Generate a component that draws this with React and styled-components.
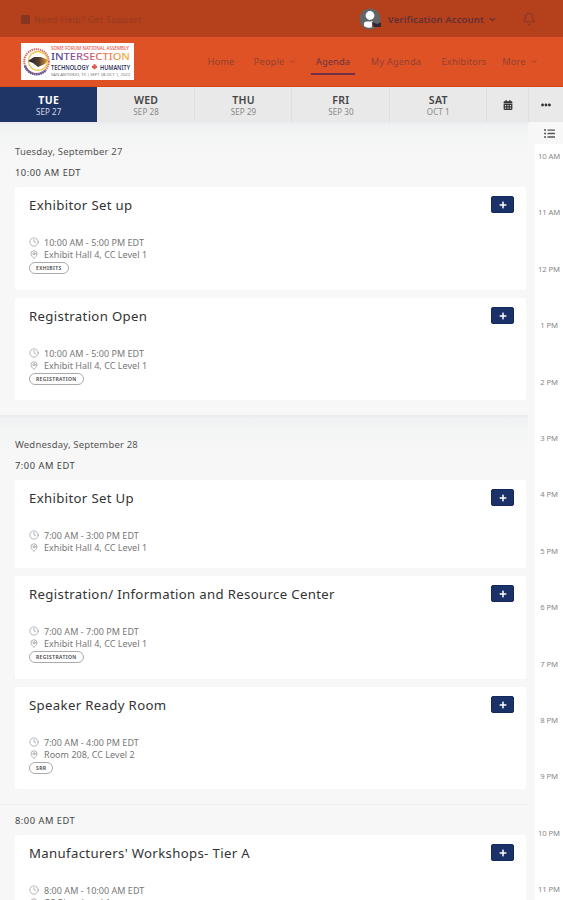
import React from 'react'
import styled, { createGlobalStyle } from 'styled-components'
import { FaPlus, FaCalendarAlt, FaEllipsisH, FaListUl } from 'react-icons/fa'
import { Bell, ChevronDown, Clock4, MapPin } from 'lucide-react'

const GlobalStyle = createGlobalStyle`
  * {
    box-sizing: border-box;
  }
  body {
    margin: 0;
    background: #f7f7f7;
    font-family: "Noto Sans", "Open Sans", sans-serif;
    color: #333;
  }
`
const Page = styled.div`
  width: 563px;
  height: 900px;
  overflow: hidden;
  display: flex;
  flex-direction: column;
`
const TopBar = styled.div`
  height: 37px;
  flex: none;
  background: #b5401c;
  display: flex;
  align-items: center;
  padding: 1px 27px 0 21px;
`
const Support = styled.div`
  display: flex;
  align-items: center;
  gap: 4px;
  font-size: 9px;
  letter-spacing: 0.27px;
  color: #963b20;
`
const SupportIcon = styled.span`
  width: 9px;
  height: 9px;
  border-radius: 1px;
  background: #86361f;
`
const Account = styled.div`
  margin-left: auto;
  display: flex;
  align-items: center;
  font-size: 9.5px;
  font-weight: 600;
  letter-spacing: 0.14px;
  color: #5f3035;

  span {
    margin: 0 4px 0 6px;
  }
`
const BellSlot = styled.div`
  margin-left: 25px;
  display: flex;
  color: #87362a;
`
const Nav = styled.div`
  height: 50px;
  flex: none;
  background: #df5226;
  border-bottom: 1px solid #d9461a;
  display: flex;
  align-items: center;
  padding: 0 24px 0 21px;
`
const LogoBox = styled.div`
  width: 113px;
  height: 37px;
  background: #fff;
  margin-bottom: 1px;

  svg {
    display: block;
  }
`
const Links = styled.div`
  margin-left: auto;
  display: flex;
  height: 25px;
  margin-bottom: -1px;
  gap: 10px;
`
const NavLink = styled.div`
  display: flex;
  justify-content: center;
  align-items: center;
  flex: none;
  width: ${(p) => p.$width}px;
  gap: 5px;
  padding-top: 1px;
  font-size: 9.3px;
  letter-spacing: 0.12px;
  white-space: nowrap;
  color: ${(p) => (p.$active ? '#6b3442' : '#94412f')};
  border-bottom: 2px solid ${(p) => (p.$active ? '#70304a' : 'transparent')};
`
const Days = styled.div`
  height: 35px;
  flex: none;
  display: flex;
  background: #e9e9e9;
`
const Day = styled.div`
  flex: 1;
  border-right: 1px solid ${(p) => (p.$active ? '#1e3566' : '#dedfe0')};
  text-align: center;
  padding: 6px 0 0 1px;
  background: ${(p) => (p.$active ? '#1e3566' : 'transparent')};
  color: ${(p) => (p.$active ? '#fff' : '#444')};
`
const DayName = styled.div`
  font-size: 10.5px;
  line-height: 14px;
  letter-spacing: 0.3px;
  font-weight: ${(p) => (p.$active ? 700 : 600)};
`
const DayDate = styled.div`
  font-size: 8px;
  line-height: 9px;
  letter-spacing: 0.1px;
  color: ${(p) => (p.$active ? '#d5dae5' : '#888')};
`
const DayTool = styled.div`
  width: ${(p) => p.$width}px;
  flex: none;
  display: flex;
  align-items: center;
  justify-content: center;
  color: #333;
  border-right: 1px solid #dedfe0;

  &:last-child {
    border-right: none;
  }
`
const Body = styled.div`
  flex: 1;
  min-height: 0;
  display: flex;
`
const List = styled.div`
  width: 535px;
`
const Section = styled.div`
  width: 528px;
  height: ${(p) => p.$height}px;
  padding: ${(p) => p.$top}px 2px 0 15px;
  border-top: ${(p) => (p.$line ? '1px solid #eee' : 'none')};
  background: ${(p) =>
    p.$shade ? 'linear-gradient(#eaebed 0, #f1f2f3 4px, #f3f4f4 14px, #f7f7f7 36px)' : 'none'};
`
const DateLabel = styled.div`
  font-size: 9.5px;
  line-height: 12px;
  letter-spacing: 0.18px;
  color: #555;
  margin-bottom: 9px;
`
const TimeLabel = styled.div`
  font-size: 9.3px;
  line-height: 12px;
  letter-spacing: 0.52px;
  color: #444;
  margin-bottom: 8px;
`
const Card = styled.div`
  height: ${(p) => p.$height}px;
  margin-bottom: 8px;
  background: #fff;
  border-radius: 2px;
  padding: 9px 12px 0 14px;
`
const CardTop = styled.div`
  display: flex;
  justify-content: space-between;
  align-items: flex-start;
  height: 40px;
`
const Title = styled.div`
  font-size: 13.2px;
  line-height: 18px;
  letter-spacing: 0.34px;
  color: #333;
`
const AddButton = styled.button`
  width: 23px;
  height: 17px;
  padding: 0;
  border: 1px solid #13285c;
  border-radius: 2px;
  background: #1a3267;
  color: #fff;
  display: flex;
  align-items: center;
  justify-content: center;
`
const Meta = styled.div`
  display: flex;
  align-items: center;
  gap: 5px;
  height: 12.6px;
  font-size: 9px;
  letter-spacing: 0.03px;
  color: #777;

  svg {
    color: #999;
    width: 10px;
  }
`
const Tag = styled.div`
  display: inline-flex;
  align-items: center;
  height: 12px;
  margin-top: 1px;
  padding: 0 6px;
  border: 1px solid #aaa;
  border-radius: 6px;
  font-size: 5px;
  font-weight: 600;
  letter-spacing: 0.4px;
  color: #444;
  vertical-align: top;
`
const Timeline = styled.div`
  width: 28px;
  background: #fff;
  overflow: hidden;
`
const ListIcon = styled.div`
  height: 22px;
  display: flex;
  align-items: center;
  justify-content: center;
  color: #555;
  background: #f7f7f7;
`
const Hour = styled.div`
  height: 56.4px;
  line-height: 25px;
  font-size: 7.7px;
  letter-spacing: -0.1px;
  text-align: center;
  color: #888;
  white-space: nowrap;
`

const days = [
  ['TUE', 'SEP 27'],
  ['WED', 'SEP 28'],
  ['THU', 'SEP 29'],
  ['FRI', 'SEP 30'],
  ['SAT', 'OCT 1'],
]

const hours = ['10 AM', '11 AM', '12 PM', '1 PM', '2 PM', '3 PM', '4 PM', '5 PM', '6 PM', '7 PM', '8 PM', '9 PM', '10 PM', '11 PM']

const links = [
  { label: 'Home', width: 36 },
  { label: 'People', width: 52, arrow: true },
  { label: 'Agenda', width: 44, active: true },
  { label: 'My Agenda', width: 62 },
  { label: 'Exhibitors', width: 54 },
  { label: 'More', width: 38, arrow: true },
]

const sections = [
  {
    date: 'Tuesday, September 27',
    time: '10:00 AM EDT',
    height: 293,
    top: 24,
    shade: true,
    sessions: [
      { title: 'Exhibitor Set up', time: '10:00 AM - 5:00 PM EDT', place: 'Exhibit Hall 4, CC Level 1', tag: 'EXHIBITS', height: 103 },
      { title: 'Registration Open', time: '10:00 AM - 5:00 PM EDT', place: 'Exhibit Hall 4, CC Level 1', tag: 'REGISTRATION', height: 102 },
    ],
  },
  {
    date: 'Wednesday, September 28',
    time: '7:00 AM EDT',
    height: 389,
    top: 24,
    shade: true,
    sessions: [
      { title: 'Exhibitor Set Up', time: '7:00 AM - 3:00 PM EDT', place: 'Exhibit Hall 4, CC Level 1', height: 88 },
      { title: 'Registration/ Information and Resource Center', time: '7:00 AM - 7:00 PM EDT', place: 'Exhibit Hall 4, CC Level 1', tag: 'REGISTRATION', height: 103 },
      { title: 'Speaker Ready Room', time: '7:00 AM - 4:00 PM EDT', place: 'Room 208, CC Level 2', tag: 'SRR', height: 102 },
    ],
  },
  {
    time: '8:00 AM EDT',
    height: 200,
    top: 10,
    line: true,
    sessions: [
      { title: "Manufacturers' Workshops- Tier A", time: '8:00 AM - 10:00 AM EDT', place: 'CC River Level 1', height: 103 },
    ],
  },
]

const Logo = () => (
  <svg width="113" height="37" viewBox="0 0 113 37" fontFamily="Noto Sans, sans-serif">
    <defs>
      <linearGradient id="rainbow">
        <stop offset="0" stopColor="#3c3f8f" />
        <stop offset="0.35" stopColor="#9a58a0" />
        <stop offset="0.6" stopColor="#e5645a" />
        <stop offset="1" stopColor="#f2b441" />
      </linearGradient>
      <linearGradient id="palm">
        <stop offset="0" stopColor="#20242e" />
        <stop offset="0.55" stopColor="#55402f" />
        <stop offset="1" stopColor="#f0a03c" />
      </linearGradient>
    </defs>
    <circle cx="15.5" cy="18.5" r="12.3" fill="none" stroke="#d96a67" strokeWidth="2" strokeDasharray="1.4 0.7" />
    <path d="M4 23 A12.3 12.3 0 0 0 25 27" fill="none" stroke="#454d99" strokeWidth="2.4" strokeDasharray="1.4 0.7" />
    <circle cx="17" cy="18" r="9.5" fill="#fff" stroke="#e9c84b" strokeWidth="1.3" />
    <path d="M7 18 L13 14 L20 14 L27 17 L24 21 L17 24 L12 20 Z" fill="url(#palm)" />
    <text x="30" y="7.3" fontSize="4.5" fontWeight="500" fill="#e2574e" textLength="78" lengthAdjust="spacingAndGlyphs">SOME FORUM NATIONAL ASSEMBLY</text>
    <text x="30" y="17" fontSize="9.4" fontWeight="500" fill="url(#rainbow)" textLength="79" lengthAdjust="spacingAndGlyphs">INTERSECTION</text>
    <text x="30" y="26.6" fontSize="7.4" fontWeight="600" fill="#34375f" textLength="38" lengthAdjust="spacingAndGlyphs">TECHNOLOGY</text>
    <path d="M73.5 21.3 V26.3 M71 23.8 H76" stroke="#e2574e" strokeWidth="2.3" />
    <text x="79" y="26.6" fontSize="7.4" fontWeight="600" fill="#34375f" textLength="30" lengthAdjust="spacingAndGlyphs">HUMANITY</text>
    <text x="30" y="33" fontSize="3.8" fill="#777" textLength="79" lengthAdjust="spacingAndGlyphs">SAN ANTONIO, TX | SEPT 28-OCT 1, 2022</text>
  </svg>
)

const Avatar = () => (
  <svg width="23" height="22" viewBox="0 0 23 22">
    <circle cx="11" cy="11" r="10.5" fill="#626669" />
    <circle cx="11" cy="7.5" r="4.4" fill="#fff" />
    <path d="M5 18 V15.5 Q5 13.5 8 13.5 H14 V19 Q8 21 5 18Z" fill="#fff" />
    <path d="M13 14 L18 16 L22 14.5 V19 H13Z" fill="#2b2736" />
    <path d="M13 14 V19 H15Z" fill="#b33b36" />
  </svg>
)

const Session = ({ item }) => (
  <Card $height={item.height}>
    <CardTop>
      <Title>{item.title}</Title>
      <AddButton aria-label="Add"><FaPlus size={8} /></AddButton>
    </CardTop>
    <Meta><Clock4 size={10} strokeWidth={1.7} />{item.time}</Meta>
    <Meta><MapPin size={9} strokeWidth={2} />{item.place}</Meta>
    {item.tag && <Tag>{item.tag}</Tag>}
  </Card>
)

const App = () => {
  return (
    <Page>
      <GlobalStyle />
      <TopBar>
        <Support><SupportIcon />Need Help? Get Support</Support>
        <Account>
          <Avatar />
          <span>Verification Account</span>
          <ChevronDown size={9} strokeWidth={3} />
        </Account>
        <BellSlot><Bell size={14} strokeWidth={1.8} /></BellSlot>
      </TopBar>
      <Nav>
        <LogoBox><Logo /></LogoBox>
        <Links>
          {links.map((l) => (
            <NavLink key={l.label} $width={l.width} $active={l.active}>
              {l.label}
              {l.arrow && <ChevronDown size={7} strokeWidth={3} />}
            </NavLink>
          ))}
        </Links>
      </Nav>
      <Days>
        {days.map(([name, date], i) => (
          <Day key={name} $active={i === 0}>
            <DayName $active={i === 0}>{name}</DayName>
            <DayDate $active={i === 0}>{date}</DayDate>
          </Day>
        ))}
        <DayTool $width={42}><FaCalendarAlt size={10} /></DayTool>
        <DayTool $width={34}><FaEllipsisH size={10} /></DayTool>
      </Days>
      <Body>
        <List>
          {sections.map((s) => (
            <Section key={s.time} $height={s.height} $top={s.top} $shade={s.shade} $line={s.line}>
              {s.date && <DateLabel>{s.date}</DateLabel>}
              <TimeLabel>{s.time}</TimeLabel>
              {s.sessions.map((item) => (
                <Session key={item.title} item={item} />
              ))}
            </Section>
          ))}
        </List>
        <Timeline>
          <ListIcon><FaListUl size={11} /></ListIcon>
          {hours.map((h) => (
            <Hour key={h}>{h}</Hour>
          ))}
        </Timeline>
      </Body>
    </Page>
  )
}

export default App
